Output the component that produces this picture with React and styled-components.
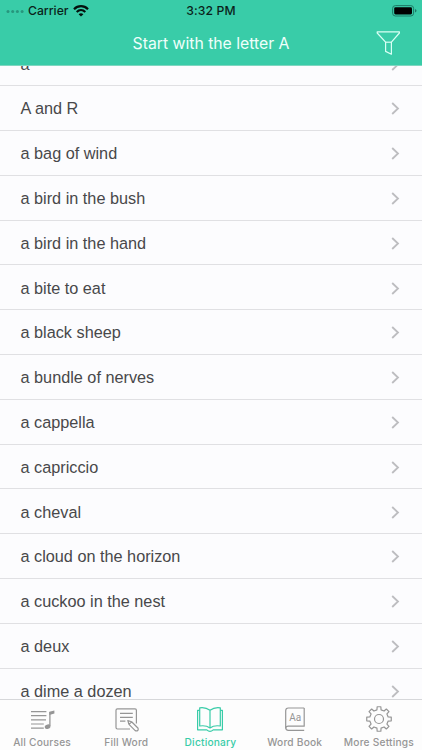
import React from 'react'
import styled, { createGlobalStyle } from 'styled-components'

const GlobalStyle = createGlobalStyle`
  :root {
    --green: #39cca8;
    --grey: #969696;
    --line: #e0e0e3;
    --bg: #fcfcfe;
  }

  * {
    box-sizing: border-box;
  }

  body {
    margin: 0;
    background-color: var(--bg);
    font-family: 'Inter', sans-serif;
  }
`

const Screen = styled.div`
  width: 422px;
  height: 750px;
  display: flex;
  flex-direction: column;
  overflow: hidden;
  background-color: var(--bg);
`

const Header = styled.header`
  flex: none;
  height: 66px;
  background-color: var(--green);
  border-bottom: 1px solid #7fd6c0;
  z-index: 1;
`

const StatusBar = styled.div`
  display: grid;
  grid-template-columns: 1fr auto 1fr;
  align-items: center;
  height: 21px;
  padding: 0 6px;
  font-size: 12.2px;
  font-weight: 500;
  color: #0b1f1a;
`

const Carrier = styled.div`
  display: flex;
  align-items: center;

  svg {
    display: block;
  }

  span {
    margin: 0 4px 0 4px;
  }
`

const Clock = styled.span`
  letter-spacing: 0.1px;
`

const Battery = styled.svg`
  display: block;
  justify-self: end;
  margin-right: -1px;
`

const NavBar = styled.div`
  display: grid;
  grid-template-columns: 1fr auto 1fr;
  align-items: center;
  height: 44px;
  padding: 0 21px;
`

const Title = styled.h1`
  grid-column: 2;
  margin: 0;
  padding-top: 1px;
  font-size: 15.8px;
  font-weight: 400;
  letter-spacing: -0.02px;
  color: #effffb;
`

const FilterButton = styled.button`
  justify-self: end;
  padding: 0;
  border: 0;
  background: none;

  svg {
    display: block;
  }
`

const List = styled.main`
  flex: 1;
  min-height: 0;
  overflow: hidden;
`

const Rows = styled.ul`
  margin: -24.6px 0 0;
  padding: 0;
  list-style: none;
`

const Row = styled.li`
  display: flex;
  align-items: center;
  justify-content: space-between;
  height: 44.8px;
  padding: 1.6px 22px 0 20.5px;
  border-bottom: 1px solid var(--line);
  font-family: 'Liberation Sans', Arial, sans-serif;
  font-size: 16.25px;
  color: #48484a;
  white-space: nowrap;
`

const TabBar = styled.nav`
  flex: none;
  display: grid;
  grid-template-columns: repeat(5, minmax(0, 1fr));
  height: 51px;
  padding-right: 1px;
  border-top: 1px solid #d6d7da;
  background-color: #fdfdfd;
`

const Tab = styled.div`
  display: flex;
  flex-direction: column;
  align-items: center;
  padding-top: 6px;
  font-size: 10.2px;
  font-weight: 500;
  line-height: 14px;
  letter-spacing: 0.2px;
  white-space: nowrap;
  color: ${({ $active }) => ($active ? 'var(--green)' : 'var(--grey)')};

  svg {
    display: block;
    margin-bottom: 3px;
    fill: none;
    stroke: currentColor;
    stroke-width: 1.2;
    stroke-linejoin: round;
  }
`

const words = [
  'a',
  'A and R',
  'a bag of wind',
  'a bird in the bush',
  'a bird in the hand',
  'a bite to eat',
  'a black sheep',
  'a bundle of nerves',
  'a cappella',
  'a capriccio',
  'a cheval',
  'a cloud on the horizon',
  'a cuckoo in the nest',
  'a deux',
  'a dime a dozen',
]

const Chevron = () => (
  <svg width="9" height="13" viewBox="0 0 9 13" fill="none" stroke="#bdbdc0" strokeWidth="1.8">
    <path d="M1.2 1 L7 6.5 L1.2 12" />
  </svg>
)

const SignalIcon = () => (
  <svg width="18" height="4" viewBox="0 0 18 4" fill="#27967d">
    <circle cx="2" cy="2.5" r="1.5" />
    <circle cx="6.7" cy="2.5" r="1.5" />
    <circle cx="11.4" cy="2.5" r="1.5" />
    <circle cx="16.1" cy="2.5" r="1.5" />
  </svg>
)

const WifiIcon = () => (
  <svg width="16" height="12" viewBox="0 0 16 12" fill="none" stroke="#04110d" strokeWidth="2.2">
    <path d="M1 4.2 C5 0.2 11 0.2 15 4.2" />
    <path d="M3.7 7 C6.2 4.6 9.8 4.6 12.3 7" />
    <path d="M8 11.5 L5.6 9.2 C7 7.9 9 7.9 10.4 9.2 Z" fill="#04110d" stroke="none" />
  </svg>
)

const FilterIcon = () => (
  <svg width="25" height="25" viewBox="0 0 25 25" fill="none" stroke="#d9fff5" strokeWidth="1.2" strokeLinejoin="round">
    <path d="M1.2 0.8 H23.4 V2 L15.4 11.2 V23.2 L9.6 20.4 V11.2 L1.2 2 Z" />
    <path d="M9.6 11.2 H15.4" />
  </svg>
)

const CoursesIcon = () => (
  <svg width="26" height="26" viewBox="0 0 26 26">
    <path d="M2 5.6 H17.4 M2 9.7 H17.4 M2 13.9 H17 M2 18 H14.8 M2 22.2 H14.8" />
    <path d="M20.9 20 V6" strokeWidth="1.3" />
    <path d="M20.3 5.8 L25.4 4.5 V7.6 L20.3 8.9 Z" fill="currentColor" stroke="none" />
    <ellipse cx="18.6" cy="20.7" rx="2.9" ry="2.2" fill="currentColor" stroke="none" transform="rotate(-20 18.6 20.7)" />
  </svg>
)

const FillIcon = () => (
  <svg width="26" height="26" viewBox="0 0 26 26">
    <path d="M17 23 H4.4 Q3 23 3 21.6 V4.2 Q3 2.8 4.4 2.8 H22 Q23.4 2.8 23.4 4.2 V17.5" />
    <path d="M7 7.4 H19.8 M7 11.3 H19.8 M7 15.2 H12.4" />
    <path d="M14.8 14.6 L18.6 15.8 L24.9 22 C25.8 24.2 24.4 25.5 22.2 24.6 L16 18.4 Z M18.6 15.8 L16 18.4" />
  </svg>
)

const BookIcon = () => (
  <svg width="28" height="26" viewBox="0 0 28 26">
    <path d="M14 4.3 C10.5 1.6 7.5 1.2 3.7 1.8 V20 C7.5 19.4 11 19.7 14 22 C17 19.7 20.5 19.4 24.3 20 V1.8 C20.5 1.2 17.5 1.6 14 4.3 Z M14 4.3 V22" />
    <path d="M3.7 4.4 H1.6 V23.8 H10.8 Q14 27 17.2 23.8 H26.4 V4.4 H24.3" />
  </svg>
)

const AaIcon = () => (
  <svg width="26" height="26" viewBox="0 0 26 26">
    <path d="M22.2 2 H6.4 Q3.7 2 3.7 4.8 V21.5 Q3.7 24.3 6.4 24.3 H22.2" />
    <path d="M22.2 2 V20.2 H6.4 Q3.7 20.2 3.7 22.2" />
    <text x="13.2" y="15.3" textAnchor="middle" fontFamily="'Roboto', sans-serif" fontSize="10" letterSpacing="0" fontWeight="400" fill="currentColor" stroke="none">
      Aa
    </text>
  </svg>
)

// outline of an eight-tooth gear, teeth narrower at the tip
const gearPath = () => {
  const points = []
  for (let i = 0; i < 8; i++) {
    const mid = (i * Math.PI) / 4 - Math.PI / 2
    const corners = [[-0.22, 9.4], [-0.15, 12.4], [0.15, 12.4], [0.22, 9.4]]
    corners.forEach(([offset, radius]) => {
      const x = 14 + radius * Math.cos(mid + offset)
      const y = 13 + radius * Math.sin(mid + offset)
      points.push(`${x.toFixed(2)} ${y.toFixed(2)}`)
    })
  }
  return `M${points.join(' L')} Z`
}

const GearIcon = () => (
  <svg width="28" height="26" viewBox="0 0 28 26">
    <path d={gearPath()} />
    <circle cx="14" cy="13" r="4.5" />
  </svg>
)

const tabs = [
  { label: 'All Courses', icon: CoursesIcon },
  { label: 'Fill Word', icon: FillIcon },
  { label: 'Dictionary', icon: BookIcon, active: true },
  { label: 'Word Book', icon: AaIcon },
  { label: 'More Settings', icon: GearIcon },
]

function App() {
  return (
    <>
      <GlobalStyle />
      <Screen>
        <Header>
          <StatusBar>
            <Carrier>
              <SignalIcon />
              <span>Carrier</span>
              <WifiIcon />
            </Carrier>
            <Clock>3:32 PM</Clock>
            <Battery width="25" height="12" viewBox="0 0 25 12">
              <rect x="0.6" y="0.6" width="21" height="10.4" rx="2.8" fill="none" stroke="#1d7a66" />
              <rect x="2.2" y="2.2" width="17.8" height="7.2" rx="1.3" fill="#000" />
              <path d="M23 4 Q24.5 4.6 24.5 5.8 Q24.5 7 23 7.6 Z" fill="#1d7a66" />
            </Battery>
          </StatusBar>
          <NavBar>
            <Title>Start with the letter A</Title>
            <FilterButton aria-label="Filter">
              <FilterIcon />
            </FilterButton>
          </NavBar>
        </Header>
        <List>
          <Rows>
            {words.map((word) => (
              <Row key={word}>
                {word}
                <Chevron />
              </Row>
            ))}
          </Rows>
        </List>
        <TabBar>
          {tabs.map(({ label, icon: Icon, active }) => (
            <Tab key={label} $active={active}>
              <Icon />
              {label}
            </Tab>
          ))}
        </TabBar>
      </Screen>
    </>
  )
}

export default App
